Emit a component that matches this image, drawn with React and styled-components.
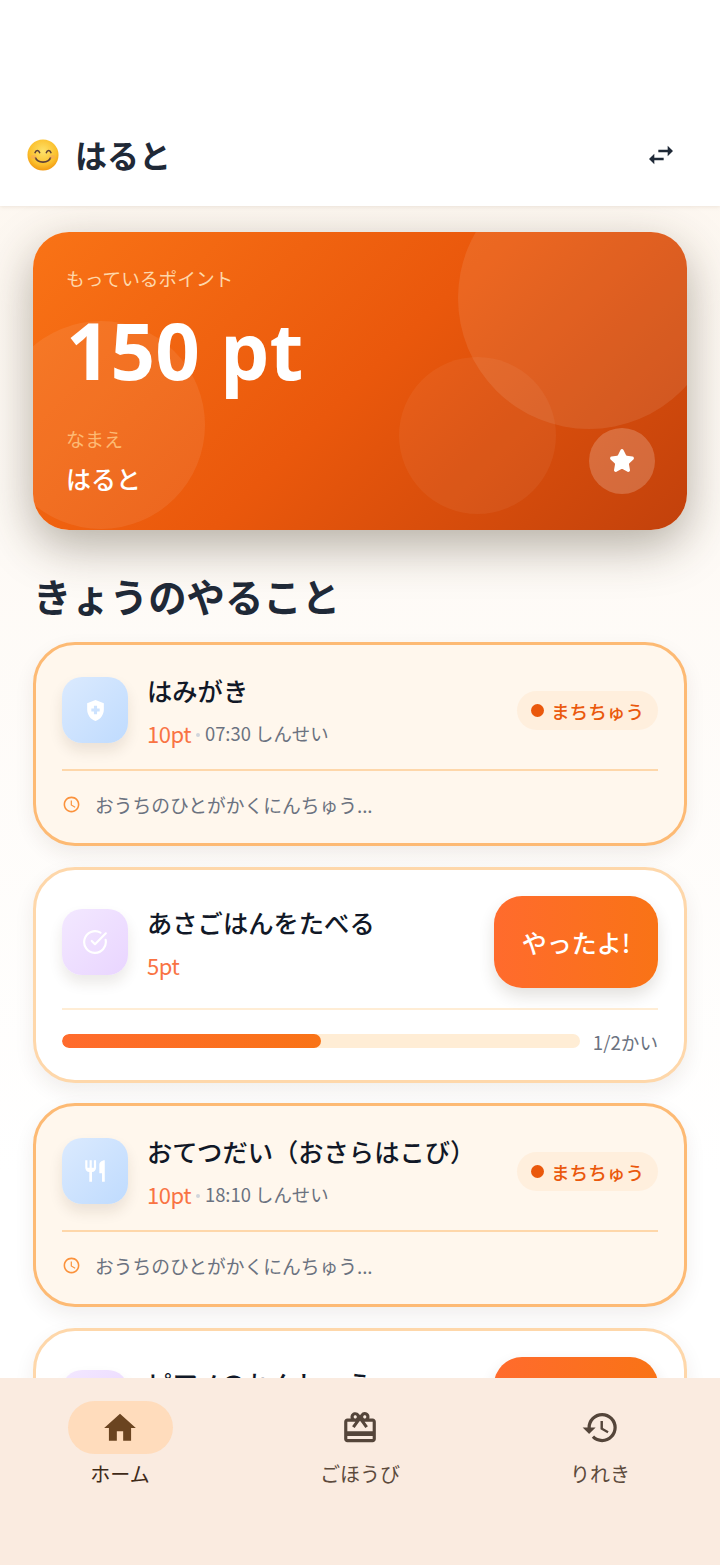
import React from "react";
import styled, { createGlobalStyle } from "styled-components";
import { CircleCheckBig, Star } from "lucide-react";
import {
  MdHome,
  MdRedeem,
  MdHistory,
  MdSwapHoriz,
  MdRestaurant,
  MdHealthAndSafety,
  MdAccessTime,
} from "react-icons/md";

const GlobalStyle = createGlobalStyle`
  html, body {
    margin: 0;
    padding: 0;
    background: #fff;
  }
  * {
    box-sizing: border-box;
  }
`;

const Page = styled.div`
  width: 720px;
  height: 1565px;
  display: flex;
  flex-direction: column;
  overflow: hidden;
  font-family: "Noto Sans CJK JP", "Noto Sans", sans-serif;
  background: linear-gradient(180deg, #fdf6ee 0%, #ffffff 75%);
`;

const Header = styled.header`
  flex: none;
  height: 206px;
  padding: 104px 43px 0 27px;
  display: flex;
  align-items: center;
  justify-content: space-between;
  background: #fff;
  box-shadow: 0 1px 4px rgba(120, 90, 50, 0.12);
  position: relative;
  z-index: 2;
`;

const Who = styled.div`
  display: flex;
  align-items: center;
  gap: 16px;
`;

const Name = styled.h1`
  margin: 0;
  padding-bottom: 2px;
  font-size: 32px;
  font-weight: 700;
  color: #1f2937;
  line-height: 44px;
`;

const Main = styled.main`
  flex: 1;
  min-height: 0;
  overflow: hidden;
  padding: 26px 33px 0;
`;

const CardShadow = styled.div`
  border-radius: 36px;
  box-shadow: 0 16px 48px rgba(60, 50, 30, 0.38);
`;

const PointCard = styled.section`
  height: 298px;
  border-radius: 36px;
  padding: 31px 33px;
  position: relative;
  overflow: hidden;
  color: #fff;
  background: linear-gradient(135deg, #f97316 0%, #ea580c 50%, #c2410c 100%);
`;

const Bubble = styled.div`
  position: absolute;
  border-radius: 50%;
  background: rgba(255, 255, 255, ${(p) => p.$alpha});
  width: ${(p) => p.$size}px;
  height: ${(p) => p.$size}px;
  left: ${(p) => p.$left}px;
  top: ${(p) => p.$top}px;
`;

const PointLabel = styled.div`
  position: relative;
  font-size: 18.7px;
  line-height: 30px;
  color: #fed7aa;
`;

const PointValue = styled.div`
  position: relative;
  margin-top: 7px;
  font-family: "Open Sans", "Noto Sans", sans-serif;
  font-size: 78px;
  line-height: 100px;
  font-weight: 700;
`;

const OwnerLabel = styled.div`
  position: relative;
  margin-top: 26px;
  font-size: 19px;
  line-height: 26px;
  color: #fdba74;
`;

const OwnerName = styled.div`
  position: relative;
  margin-top: 7px;
  font-size: 25px;
  line-height: 38px;
  font-weight: 500;
`;

const StarBadge = styled.div`
  position: absolute;
  right: 32px;
  bottom: 36px;
  width: 66px;
  height: 66px;
  border-radius: 50%;
  background: rgba(255, 255, 255, 0.2);
  display: flex;
  align-items: center;
  justify-content: center;
`;

const SectionTitle = styled.h2`
  margin: 41px 0 23px;
  font-size: 38.4px;
  line-height: 48px;
  font-weight: 700;
  color: #1f2937;
`;

const TaskList = styled.div`
  display: flex;
  flex-direction: column;
  gap: 20.5px;
`;

const TaskCard = styled.article`
  flex: none;
  border-radius: 42px;
  padding: 26px;
  border: 3px solid ${(p) => (p.$pending ? "#fdba74" : "#fed7aa")};
  background: ${(p) => (p.$pending ? "#fff7ed" : "#fff")};
  box-shadow: 0 8px 20px rgba(60, 40, 20, 0.08);
`;

const TaskRow = styled.div`
  display: flex;
  align-items: center;
  gap: 20px;
  padding-bottom: 20px;
  border-bottom: 2px solid ${(p) => (p.$pending ? "#fed7aa" : "#ffedd5")};
`;

const TaskIcon = styled.div`
  flex: none;
  width: 66px;
  height: 66px;
  border-radius: 20px;
  display: flex;
  align-items: center;
  justify-content: center;
  color: #fff;
  background: ${(p) =>
    p.$tone === "purple"
      ? "linear-gradient(135deg, #f3e8ff, #e9d5ff)"
      : "linear-gradient(135deg, #dbeafe, #bfdbfe)"};
  box-shadow: 0 8px 14px rgba(60, 40, 20, 0.1);
`;

const TaskBody = styled.div`
  flex: 1;
  min-width: 0;
  margin-left: -1px;
`;

const TaskTitle = styled.div`
  font-size: 25.3px;
  line-height: 39px;
  font-weight: 500;
  color: #111827;
  white-space: nowrap;
`;

const TaskMeta = styled.div`
  margin-top: 7px;
  display: flex;
  align-items: center;
  font-size: 18.4px;
  line-height: 32px;
  color: #6b7280;
`;

const Points = styled.span`
  font-size: 22px;
  color: #f97343;
  letter-spacing: -0.5px;
`;

const Dot = styled.span`
  width: 4px;
  height: 4px;
  margin: 4px 5px 0;
  border-radius: 50%;
  background: #d1d5db;
`;

const StatusPill = styled.div`
  flex: none;
  height: 39px;
  padding: 0 14px;
  border-radius: 20px;
  display: flex;
  align-items: center;
  gap: 7px;
  font-size: 18.6px;
  font-weight: 500;
  color: #ea580c;
  background: #ffefdd;
`;

const StatusDot = styled.span`
  width: 13px;
  height: 13px;
  border-radius: 50%;
  background: #ea580c;
`;

const DoneButton = styled.button`
  flex: none;
  width: 164px;
  height: 92px;
  border: 0;
  border-radius: 28px;
  font-family: inherit;
  font-size: 25px;
  font-weight: 500;
  color: #fff;
  background: linear-gradient(90deg, #ff6b2d, #f97316);
  box-shadow: 0 8px 16px rgba(60, 40, 20, 0.14);
`;

const TaskFooter = styled.div`
  margin-top: 20px;
  height: 26px;
  display: flex;
  align-items: center;
  gap: 14px;
  font-size: 18.75px;
  color: #6b7280;
  svg {
    color: #fb923c;
  }
`;

const ProgressRow = styled.div`
  margin-top: 19px;
  height: 25px;
  display: flex;
  align-items: center;
  gap: 13px;
`;

const Track = styled.div`
  flex: 1;
  height: 14px;
  border-radius: 7px;
  background: #ffedd5;
  overflow: hidden;
`;

const Fill = styled.div`
  height: 100%;
  border-radius: 7px;
  background: linear-gradient(90deg, #ff6b2d, #f97316);
`;

const ProgressText = styled.span`
  font-size: 18.6px;
  color: #6b7280;
`;

const BottomNav = styled.nav`
  flex: none;
  height: 187px;
  padding-top: 23px;
  display: grid;
  grid-template-columns: repeat(3, 1fr);
  background: #faebe0;
  position: relative;
  z-index: 2;
`;

const NavItem = styled.div`
  display: flex;
  flex-direction: column;
  align-items: center;
  font-size: 20px;
  line-height: 30px;
  color: ${(p) => (p.$active ? "#3f2a18" : "#5c4a3c")};
`;

const NavIcon = styled.div`
  width: 105px;
  height: 53px;
  margin-bottom: 5px;
  border-radius: 27px;
  display: flex;
  align-items: center;
  justify-content: center;
  color: ${(p) => (p.$active ? "#6b4420" : "#54453a")};
  background: ${(p) => (p.$active ? "#ffdcbc" : "transparent")};
`;

const Smiley = () => (
  <svg width="32" height="32" viewBox="0 0 34 34">
    <defs>
      <radialGradient id="face" cx="50%" cy="38%" r="62%">
        <stop offset="0%" stopColor="#fde26a" />
        <stop offset="70%" stopColor="#fbc02d" />
        <stop offset="100%" stopColor="#f29a12" />
      </radialGradient>
    </defs>
    <circle cx="17" cy="17" r="16.500" fill="url(#face)" />
    <path d="M8.500 14.500c1-3 4-3 5 0M20.500 14.500c1-3 4-3 5 0" fill="none" stroke="#5d4037" strokeWidth="1.600" strokeLinecap="round" />
    <path d="M9 20c2 6 14 6 16 0" fill="none" stroke="#5d4037" strokeWidth="1.800" strokeLinecap="round" />
    <ellipse cx="7" cy="19" rx="3" ry="2" fill="#f7a35c" opacity="0.5" />
    <ellipse cx="27" cy="19" rx="3" ry="2" fill="#f7a35c" opacity="0.5" />
  </svg>
);

const PendingCard = ({ title, points, time, icon }) => (
  <TaskCard $pending>
    <TaskRow $pending>
      <TaskIcon $tone="blue">{icon}</TaskIcon>
      <TaskBody>
        <TaskTitle>{title}</TaskTitle>
        <TaskMeta>
          <Points>{points}</Points>
          <Dot />
          {time} しんせい
        </TaskMeta>
      </TaskBody>
      <StatusPill>
        <StatusDot />
        まちちゅう
      </StatusPill>
    </TaskRow>
    <TaskFooter>
      <MdAccessTime size={19} />
      おうちのひとがかくにんちゅう...
    </TaskFooter>
  </TaskCard>
);

const OpenCard = ({ title, points, done, total }) => (
  <TaskCard>
    <TaskRow>
      <TaskIcon $tone="purple">
        <CircleCheckBig size={26} strokeWidth={2} />
      </TaskIcon>
      <TaskBody>
        <TaskTitle>{title}</TaskTitle>
        <TaskMeta>
          <Points>{points}</Points>
        </TaskMeta>
      </TaskBody>
      <DoneButton>やったよ!</DoneButton>
    </TaskRow>
    <ProgressRow>
      <Track>
        <Fill style={{ width: `${(done / total) * 100}%` }} />
      </Track>
      <ProgressText>
        {done}/{total}かい
      </ProgressText>
    </ProgressRow>
  </TaskCard>
);

export default function App() {
  return (
    <Page>
      <GlobalStyle />
      <Header>
        <Who>
          <Smiley />
          <Name>はると</Name>
        </Who>
        <MdSwapHoriz size={32} color="#1f2937" />
      </Header>
      <Main>
        <CardShadow>
          <PointCard>
            <Bubble $size={262} $left={425} $top={-65} $alpha={0.09} />
            <Bubble $size={157} $left={366} $top={125} $alpha={0.05} />
            <Bubble $size={208} $left={-36} $top={89} $alpha={0.08} />
            <PointLabel>もっているポイント</PointLabel>
            <PointValue>150 pt</PointValue>
            <OwnerLabel>なまえ</OwnerLabel>
            <OwnerName>はると</OwnerName>
            <StarBadge>
              <Star size={26} color="#fff" fill="#fff" />
            </StarBadge>
          </PointCard>
        </CardShadow>
        <SectionTitle>きょうのやること</SectionTitle>
        <TaskList>
          <PendingCard title="はみがき" points="10pt" time="07:30" icon={<MdHealthAndSafety size={25} />} />
          <OpenCard title="あさごはんをたべる" points="5pt" done={1} total={2} />
          <PendingCard
            title="おてつだい（おさらはこび）"
            points="10pt"
            time="18:10"
            icon={<MdRestaurant size={26} />}
          />
          <OpenCard title="ピアノのれんしゅう" points="10pt" done={0} total={1} />
        </TaskList>
      </Main>
      <BottomNav>
        <NavItem $active>
          <NavIcon $active>
            <MdHome size={38} />
          </NavIcon>
          ホーム
        </NavItem>
        <NavItem>
          <NavIcon>
            <MdRedeem size={38} />
          </NavIcon>
          ごほうび
        </NavItem>
        <NavItem>
          <NavIcon>
            <MdHistory size={39} />
          </NavIcon>
          りれき
        </NavItem>
      </BottomNav>
    </Page>
  );
}
